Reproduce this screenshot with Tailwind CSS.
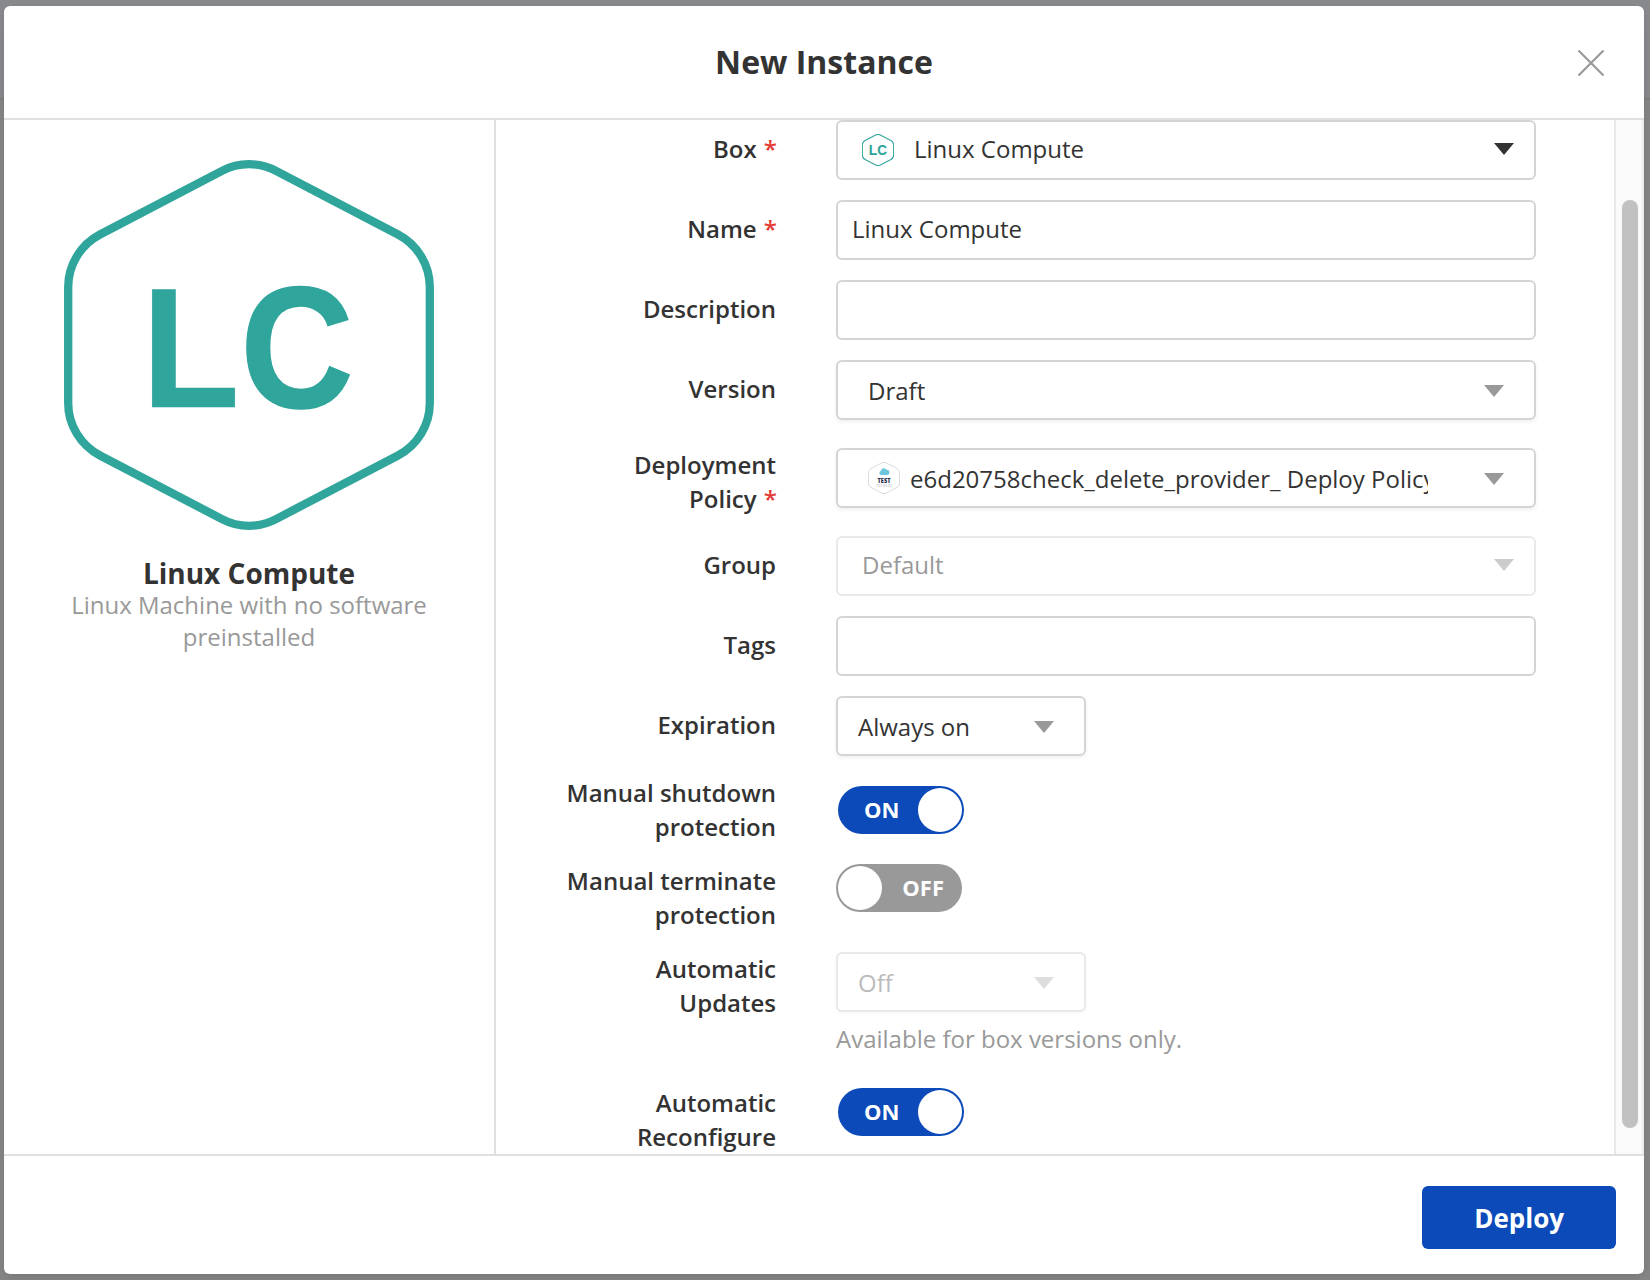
<!DOCTYPE html>
<html lang="en">
<head>
<meta charset="utf-8">
<title>New Instance</title>
<script src="https://cdn.jsdelivr.net/npm/@tailwindcss/browser@4"></script>
</head>
<body class="h-[1280px] w-[1650px] overflow-hidden bg-[#8b8c8f] font-['Open_Sans',sans-serif] text-[24px] leading-[34px] text-[#333]">
<svg class="hidden">
  <symbol id="hex" viewBox="0 0 370 370">
    <path d="M4.2 127 C4.2 105 16.5 84.8 36 74.5 L158 10.9 C166.3 6.5 175.6 4.2 185 4.2 C194.4 4.2 203.7 6.5 212 10.9 L334 74.5 C353.5 84.8 365.8 105 365.8 127 V243 C365.8 265 353.5 285.2 334 295.5 L212 359.1 C203.7 363.5 194.4 365.8 185 365.8 C175.6 365.8 166.3 363.5 158 359.1 L36 295.5 C16.5 285.2 4.2 265 4.2 243 Z" fill="none" stroke="currentColor"/>
  </symbol>
  <symbol id="lc" viewBox="0 0 370 370">
    <g font-family="Liberation Sans, sans-serif" font-weight="700" font-size="171" fill="currentColor" stroke="currentColor">
      <text transform="translate(77.5 246.5) scale(.94 1)" stroke-width="0.6">L</text>
      <text transform="translate(176.5 247) scale(.915 1.012)" stroke-width="1.5">C</text>
    </g>
  </symbol>
</svg>
<div class="h-full border-t-[98px] border-[#8a8b8e] bg-[#878788]">
  <div class="h-0.5 bg-[#7f7f81]"></div>
</div>
<main class="absolute top-1.5 left-1 flex h-[1268px] w-[1640px] flex-col overflow-hidden rounded-[6px] bg-white shadow-[0_4px_16px_rgba(0,0,0,0.12)]">
  <header class="relative flex h-[114px] shrink-0 items-center justify-center border-b-2 border-[#e0e0e0]">
    <h1 class="text-[32px] leading-[44px] font-bold">New Instance</h1>
    <button class="absolute top-[43px] right-[39px]" aria-label="Close">
      <svg class="block" width="28" height="28" viewBox="0 0 28 28" fill="none" stroke="#999" stroke-width="2.2"><path d="M1.5 1.5 L26.5 26.5 M26.5 1.5 L1.5 26.5"/></svg>
    </button>
  </header>

  <div class="flex h-[1034px] shrink-0">
    <aside class="flex w-[492px] shrink-0 flex-col items-center border-r-2 border-[#e0e0e0] pt-10 text-center">
      <svg class="block text-[#30a59b]" width="370" height="370" viewBox="0 0 370 370">
        <use href="#hex" stroke-width="8.3"/>
        <use href="#lc"/>
      </svg>
      <h2 class="mt-[27px] text-[28px] leading-8 font-bold">Linux Compute</h2>
      <p class="w-[370px] leading-8 text-[#999]">Linux Machine with no software preinstalled</p>
    </aside>

    <section class="flex w-[1118px] shrink-0 flex-col overflow-hidden">
      <div class="flex">
        <label class="w-[280px] pt-3 text-right font-semibold">Box <span class="-mr-px ml-px text-[#e53935]">*</span></label>
        <div class="ml-[60px] flex h-[60px] w-[700px] items-center rounded-[6px] border-2 border-[#d4d4d4] pr-5 pl-6">
          <svg class="block text-[#30a59b]" width="32" height="32" viewBox="0 0 370 370">
            <use href="#hex" stroke-width="12"/>
            <use href="#lc"/>
          </svg>
          <span class="-mt-0.5 ml-5 flex-1">Linux Compute</span>
          <svg class="-mt-0.5 block" width="20" height="12" viewBox="0 0 20 12" fill="#333"><path d="M0 0H20L10 12Z"/></svg>
        </div>
      </div>
      <div class="mt-5 flex">
        <label class="w-[280px] pt-3 text-right font-semibold">Name <span class="-mr-px ml-px text-[#e53935]">*</span></label>
        <div class="ml-[60px] h-[60px] w-[700px] rounded-[6px] border-2 border-[#d4d4d4] px-3.5 pt-2.5">Linux Compute</div>
      </div>
      <div class="mt-5 flex">
        <label class="w-[280px] pt-3 text-right font-semibold">Description</label>
        <div class="ml-[60px] h-[60px] w-[700px] rounded-[6px] border-2 border-[#d4d4d4]"></div>
      </div>
      <div class="mt-5 flex">
        <label class="w-[280px] pt-3 text-right font-semibold">Version</label>
        <div class="ml-[60px] flex h-[60px] w-[700px] justify-between rounded-[6px] border-2 border-[#d4d4d4] pt-3 pr-[30px] pl-[30px] shadow-[0_2px_4px_rgba(0,0,0,0.06)]">
          <span>Draft</span>
          <svg class="mt-[11px] block" width="20" height="12" viewBox="0 0 20 12" fill="#999"><path d="M0 0H20L10 12Z"/></svg>
        </div>
      </div>
      <div class="mt-7 flex">
        <label class="w-[280px] text-right font-semibold">Deployment<br>Policy <span class="-mr-px ml-px text-[#e53935]">*</span></label>
        <div class="ml-[60px] flex h-[60px] w-[700px] rounded-[6px] border-2 border-[#d4d4d4] pt-3 pr-[30px] pl-[30px] shadow-[0_2px_4px_rgba(0,0,0,0.06)]">
          <svg class="block shrink-0 text-[#d6d8da]" width="32" height="32" viewBox="0 0 370 370">
            <use href="#hex" stroke-width="11"/>
            <path d="M150 150 a25 25 0 0 1 0 -48 a34 34 0 0 1 64 -12 a30 30 0 0 1 8 60 Z" fill="#6ec5de"/>
            <text x="185" y="240" text-anchor="middle" textLength="150" lengthAdjust="spacingAndGlyphs" font-family="Open Sans, sans-serif" font-weight="800" font-size="70" fill="#2b2f4c">TEST</text>
            <text x="185" y="284" text-anchor="middle" textLength="180" lengthAdjust="spacingAndGlyphs" font-family="Open Sans, sans-serif" font-size="32" fill="#b4b6c0">TEST MICRO</text>
          </svg>
          <span class="ml-2.5 w-[518px] overflow-hidden whitespace-nowrap">e6d20758check_delete_provider_ Deploy Policy</span>
          <svg class="mt-[11px] ml-14 block shrink-0" width="20" height="12" viewBox="0 0 20 12" fill="#999"><path d="M0 0H20L10 12Z"/></svg>
        </div>
      </div>
      <div class="mt-5 flex">
        <label class="w-[280px] pt-3 text-right font-semibold">Group</label>
        <div class="ml-[60px] flex h-[60px] w-[700px] justify-between rounded-[6px] border-2 border-[#e9e9e9] pt-2.5 pr-5 pl-6 text-[#999]">
          <span>Default</span>
          <svg class="mt-[11px] block" width="20" height="12" viewBox="0 0 20 12" fill="#ccc"><path d="M0 0H20L10 12Z"/></svg>
        </div>
      </div>
      <div class="mt-5 flex">
        <label class="w-[280px] pt-3 text-right font-semibold">Tags</label>
        <div class="ml-[60px] h-[60px] w-[700px] rounded-[6px] border-2 border-[#d4d4d4]"></div>
      </div>
      <div class="mt-5 flex">
        <label class="w-[280px] pt-3 text-right font-semibold">Expiration</label>
        <div class="ml-[60px] flex h-[60px] w-[250px] justify-between rounded-[6px] border-2 border-[#d4d4d4] pt-3 pr-[30px] pl-5 shadow-[0_2px_4px_rgba(0,0,0,0.06)]">
          <span>Always on</span>
          <svg class="mt-[11px] block" width="20" height="12" viewBox="0 0 20 12" fill="#999"><path d="M0 0H20L10 12Z"/></svg>
        </div>
      </div>
      <div class="mt-5 flex">
        <label class="w-[280px] text-right font-semibold">Manual shutdown<br>protection</label>
        <div class="mt-2.5 ml-[62px] flex h-12 w-[126px] items-center justify-between rounded-full bg-[#0b4ab8] pr-0.5 pl-[26px]">
          <span class="pb-0.5 text-[22px] font-bold text-white">ON</span>
          <span class="size-11 rounded-full bg-white"></span>
        </div>
      </div>
      <div class="mt-5 flex">
        <label class="w-[280px] text-right font-semibold">Manual terminate<br>protection</label>
        <div class="ml-[60px] flex h-12 w-[126px] items-center justify-between rounded-full bg-[#999] pr-[18px] pl-0.5">
          <span class="size-11 rounded-full bg-white"></span>
          <span class="pb-0.5 text-[22px] font-bold text-white">OFF</span>
        </div>
      </div>
      <div class="mt-5 flex">
        <label class="w-[280px] text-right font-semibold">Automatic<br>Updates</label>
        <div class="ml-[60px]">
          <div class="flex h-[60px] w-[250px] justify-between rounded-[6px] border-2 border-[#e9e9e9] pt-3 pr-[30px] pl-5 text-[#bbb] shadow-[0_2px_4px_rgba(0,0,0,0.03)]">
            <span>Off</span>
            <svg class="mt-[11px] block" width="20" height="12" viewBox="0 0 20 12" fill="#ddd"><path d="M0 0H20L10 12Z"/></svg>
          </div>
          <p class="mt-2.5 text-[#999]">Available for box versions only.</p>
        </div>
      </div>
      <div class="mt-[30px] flex">
        <label class="w-[280px] text-right font-semibold">Automatic<br>Reconfigure</label>
        <div class="mt-0.5 ml-[62px] flex h-12 w-[126px] items-center justify-between rounded-full bg-[#0b4ab8] pr-0.5 pl-[26px]">
          <span class="pb-0.5 text-[22px] font-bold text-white">ON</span>
          <span class="size-11 rounded-full bg-white"></span>
        </div>
      </div>
    </section>

    <div class="w-[30px] shrink-0 border-r-2 border-l-2 border-r-[#ededed] border-l-[#e8e8e8] bg-[#fafafa] pt-20 pl-1.5">
      <div class="h-[928px] w-4 rounded-full bg-[#c1c1c1]"></div>
    </div>
  </div>

  <footer class="flex flex-1 justify-end border-t-2 border-[#e0e0e0] pt-[30.4px] pr-7">
    <button class="h-[62.4px] w-[193.6px] rounded-[6px] bg-[#0b4ab8] text-[26px] font-bold text-white">Deploy</button>
  </footer>
</main>
</body>
</html>
